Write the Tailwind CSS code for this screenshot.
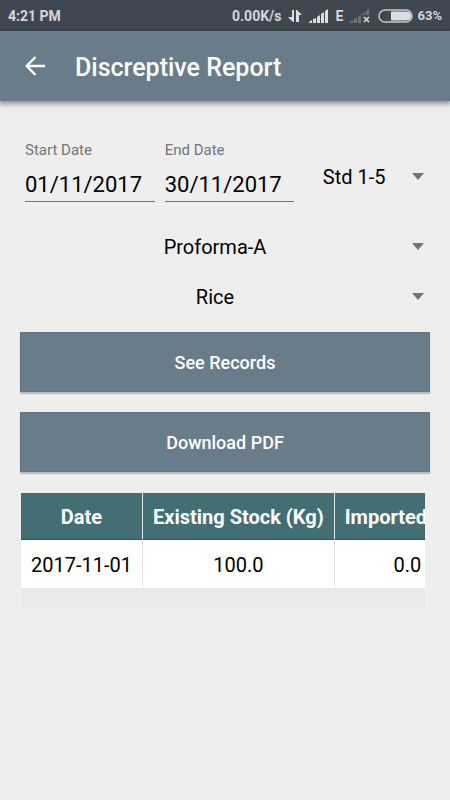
<!DOCTYPE html>
<html lang="en">
<head>
<meta charset="utf-8">
<meta name="viewport" content="width=device-width, initial-scale=1">
<title>Discreptive Report</title>
<script src="https://cdn.jsdelivr.net/npm/@tailwindcss/browser@4"></script>
</head>
<body class="min-h-screen bg-[#eeeeee] font-[Roboto,sans-serif] text-black">
  <div class="flex h-[31px] items-center justify-between bg-[#3f4850] px-2 pt-px text-sm font-bold text-[#d4d6d8]">
    <span>4:21 PM</span>
    <div class="flex items-center">
      <span>0.00K/s</span>
      <svg class="ml-[7px] h-[14px] w-[14px]" viewBox="0 0 14 14" fill="#dcdedf" aria-hidden="true"><path d="M4 1h2v12h-1L0 8h4zM8 1h1l5 5h-3v7H8z"/></svg>
      <svg class="ml-[7px] h-[14px] w-5" viewBox="0 0 20 14" fill="#dcdedf" aria-hidden="true"><path d="M0 14v-1l3-2v3zM4 14v-4l3-1v5zM8 14V8l3-2v8zM12 14V5l3-2v11zM16 14V2l3-2v14z"/></svg>
      <span class="ml-[6px] w-[11px]">E</span>
      <svg class="ml-1 h-[14px] w-5" viewBox="0 0 20 14" aria-hidden="true"><path fill="#68727a" d="M0 14v-1l3-2v3zM4 14v-4l3-1v5zM8 14V8l3-2v8zM12 6V5l3-2v3zM16 6V2l3-2v6z"/><path d="M14 8l5 5M19 8l-5 5" stroke="#dcdedf" stroke-width="1.6"/></svg>
      <svg class="ml-2 h-[14px] w-[35px]" viewBox="0 0 35 14" aria-hidden="true"><rect x="1" y="1" width="33" height="12" rx="6" fill="none" stroke="#c4c8cb" stroke-width="1.5"/><path fill="#dcdedf" d="M13 2.4h15.500a4.600 4.600 0 0 1 0 9.200H13z"/></svg>
      <span class="ml-1 text-[13px] leading-5">63%</span>
    </div>
  </div>
  <header class="flex h-[70px] items-center bg-[#697c89] px-[25px] pt-1 text-white shadow-[0_2px_5px_1px_rgba(0,0,0,0.4)]">
    <button type="button" aria-label="Back" class="mr-[30px] h-5 w-5 self-start pt-[21px]">
      <svg class="h-5 w-5" viewBox="0 0 20 20" fill="none" stroke="white" stroke-width="2.4" aria-hidden="true"><path d="M10.500 1L1.700 10l8.800 9M1.700 10H20"/></svg>
    </button>
    <h1 class="text-[25px] font-medium">Discreptive Report</h1>
  </header>
  <main class="px-5 pt-10">
    <form>
      <div class="flex gap-[10px] pl-[5px]">
        <div class="min-w-0 flex-[130]">
          <label for="start" class="block text-[15px] leading-[18px] text-[#757575]">Start Date</label>
          <input id="start" type="text" value="01/11/2017" class="mt-2 block h-[35px] w-full border-b border-[#767676] bg-transparent text-[22px] outline-none">
        </div>
        <div class="min-w-0 flex-[130]">
          <label for="end" class="block text-[15px] leading-[18px] text-[#757575]">End Date</label>
          <input id="end" type="text" value="30/11/2017" class="mt-2 block h-[35px] w-full border-b border-[#767676] bg-transparent text-[22px] outline-none">
        </div>
        <div class="relative mt-4 ml-[10px] h-10 min-w-0 flex-[116]">
          <select aria-label="Standard" class="h-10 w-full appearance-none bg-transparent pr-[36px] text-center text-xl outline-none [text-align-last:center]"><option>Std 1-5</option></select>
          <svg class="pointer-events-none absolute top-4 right-[6px] h-[7px] w-3" viewBox="0 0 12 7" fill="#737373" aria-hidden="true"><path d="M0 0h12L6 7z"/></svg>
        </div>
      </div>
      <div class="relative mt-[25px]">
        <select aria-label="Proforma" class="h-10 w-full appearance-none bg-transparent pr-5 text-center text-xl outline-none [text-align-last:center]"><option>Proforma-A</option></select>
        <svg class="pointer-events-none absolute top-4 right-[6px] h-[7px] w-3" viewBox="0 0 12 7" fill="#737373" aria-hidden="true"><path d="M0 0h12L6 7z"/></svg>
      </div>
      <div class="relative mt-[10px]">
        <select aria-label="Item" class="h-10 w-full appearance-none bg-transparent pr-5 text-center text-xl outline-none [text-align-last:center]"><option>Rice</option></select>
        <svg class="pointer-events-none absolute top-4 right-[6px] h-[7px] w-3" viewBox="0 0 12 7" fill="#737373" aria-hidden="true"><path d="M0 0h12L6 7z"/></svg>
      </div>
      <button type="button" class="mt-[15px] block h-[60px] w-full border border-[#5d7687] bg-[#697c89] pt-[2px] text-lg font-medium text-white shadow-[0_2px_1px_rgba(0,0,0,0.2)]">See Records</button>
      <button type="button" class="mt-5 block h-[60px] w-full border border-[#5d7687] bg-[#697c89] pt-[2px] text-lg font-medium text-white shadow-[0_2px_1px_rgba(0,0,0,0.2)]">Download PDF</button>
    </form>
    <div class="mt-[21px] mr-[5px] ml-px overflow-x-auto bg-[#e9e9e9] pb-5 [scrollbar-width:none]">
      <table class="border-separate border-spacing-0 text-center text-xl whitespace-nowrap">
        <thead>
          <tr class="bg-[#426e74] text-white">
            <th class="h-[47px] border-r border-b border-r-[#e4e8e8] border-b-[#1c6168] px-[10px] pt-px font-bold">Date</th>
            <th class="h-[47px] border-r border-b border-r-[#e4e8e8] border-b-[#1c6168] px-[10px] pt-px font-bold">Existing Stock (Kg)</th>
            <th class="h-[47px] border-b border-b-[#1c6168] px-[10px] pt-px font-bold">Imported (Kg)</th>
          </tr>
        </thead>
        <tbody>
          <tr class="bg-white">
            <td class="h-12 border-r border-[#e4e4e4] px-[10px] pt-px">2017-11-01</td>
            <td class="h-12 border-r border-[#e4e4e4] px-[10px] pt-px">100.0</td>
            <td class="h-12 px-[10px] pt-px">0.0</td>
          </tr>
        </tbody>
      </table>
    </div>
  </main>
</body>
</html>
